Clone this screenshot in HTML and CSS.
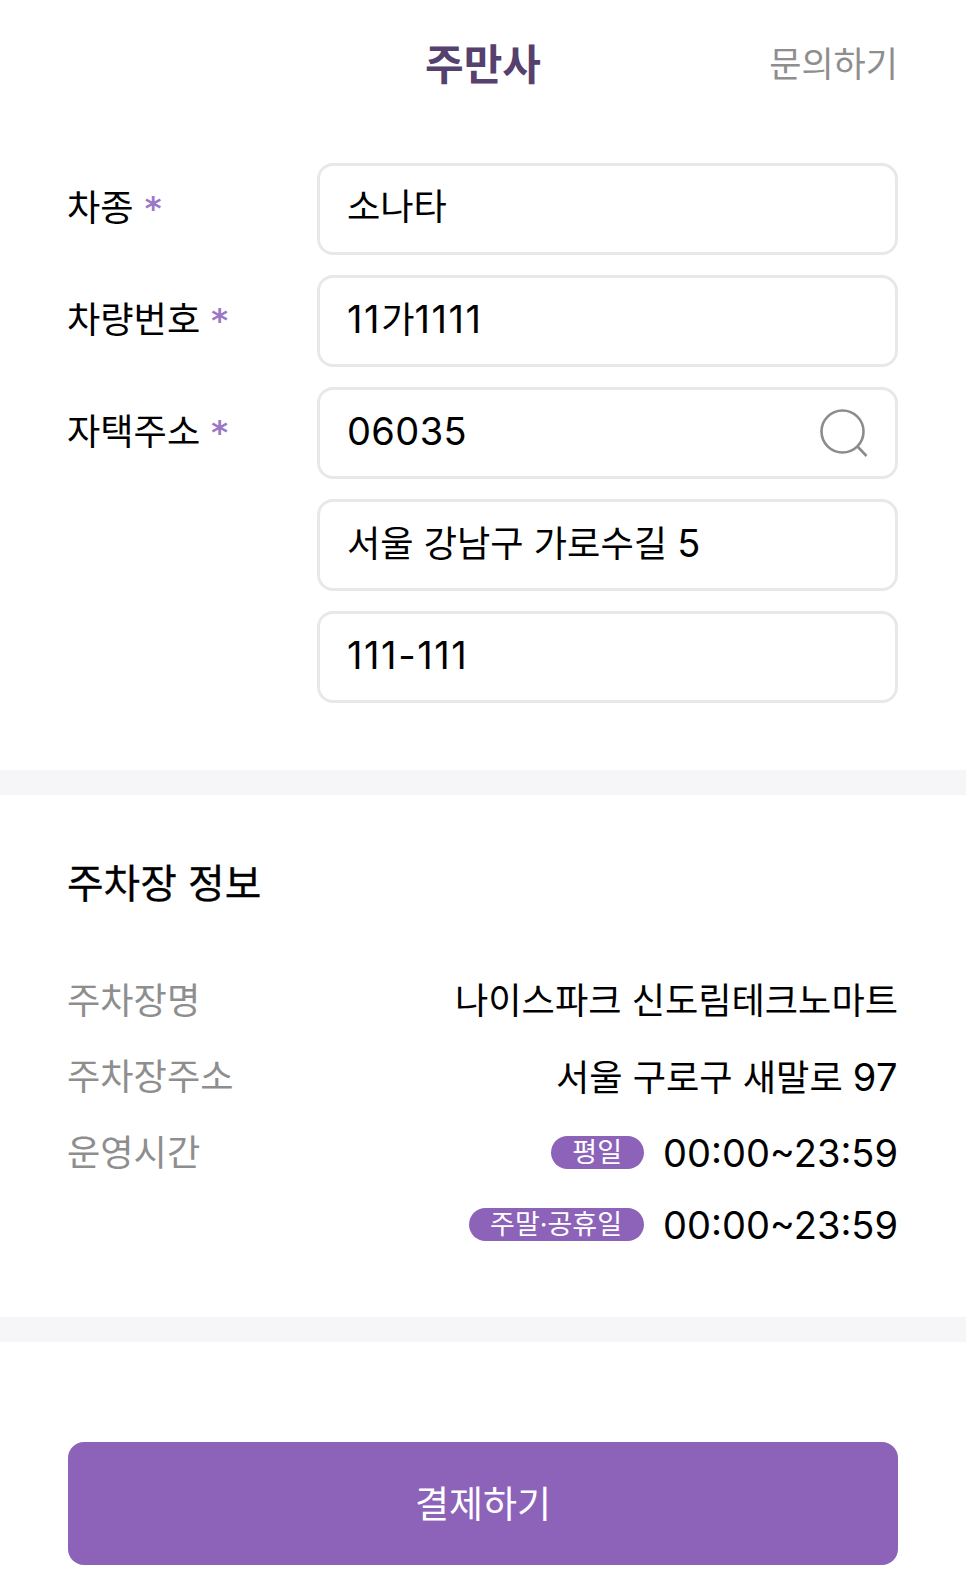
FILE: index.html
```html
<html lang="ko">

<head>
    <meta charset="UTF-8">
    <meta name="viewport" content="width=device-width, initial-scale=1.0">
    <title>주만사</title>
    <link rel="stylesheet" href="styles.css">
</head>

<body>
    <div class="header">
        <div></div>
        <div class="header-title">주만사</div>
        <div class="header-link">문의하기</div>
    </div>

    <div class="form">
        <div class="form-row">
            <div class="form-label">차종 <span class="required">*</span></div>
            <div class="form-fields">
                <div class="input"><span>소나타</span></div>
            </div>
        </div>
        <div class="form-row">
            <div class="form-label">차량번호 <span class="required">*</span></div>
            <div class="form-fields">
                <div class="input"><span><span class="num num-wide">11</span>가<span class="num num-wide">1111</span></span></div>
            </div>
        </div>
        <div class="form-row">
            <div class="form-label">자택주소 <span class="required">*</span></div>
            <div class="form-fields">
                <div class="input input-search">
                    <span class="num">06035</span>
                    <svg class="search-icon" viewBox="0 0 50 50" width="50" height="50">
                        <circle cx="22.5" cy="22.5" r="21" fill="none" stroke="#8c8c8c" stroke-width="2.6" />
                        <line x1="37.5" y1="37.5" x2="46.5" y2="47" stroke="#8c8c8c" stroke-width="2.6" />
                    </svg>
                </div>
                <div class="input"><span>서울 강남구 가로수길 <span class="num">5</span></span></div>
                <div class="input"><span class="num num-wide">111-111</span></div>
            </div>
        </div>
    </div>

    <div class="divider"></div>

    <div class="info">
        <div class="info-title">주차장 정보</div>
        <div class="info-row">
            <div class="info-label">주차장명</div>
            <div class="info-value">나이스파크 신도림테크노마트</div>
        </div>
        <div class="info-row">
            <div class="info-label">주차장주소</div>
            <div class="info-value">서울 구로구 새말로 <span class="num">97</span></div>
        </div>
        <div class="info-row info-row-hours">
            <div class="info-label">운영시간</div>
            <div class="info-value hours">
                <span class="pill">평일</span>
                <span class="num time">00:00~23:59</span>
            </div>
        </div>
        <div class="info-row info-row-last">
            <div class="info-label"></div>
            <div class="info-value hours">
                <span class="pill">주말·공휴일</span>
                <span class="num time">00:00~23:59</span>
            </div>
        </div>
    </div>

    <div class="divider"></div>

    <div class="footer">
        <div class="pay-button">결제하기</div>
    </div>
</body>

</html>
```

FILE: styles.css
```css
html,
body {
    width: 100%;
    height: 100%;
    padding: 0;
    margin: 0;
    background-color: white;
    font-family: Inter, "Noto Sans CJK KR", sans-serif;
    font-size: 36.2px;
    color: black;
}

.num {
    font-size: 38px;
    letter-spacing: 0.4px;
}

.num-wide {
    letter-spacing: 1.6px;
}

.time {
    letter-spacing: 0;
}

.header {
    display: grid;
    grid-template-columns: 1fr auto 1fr;
    align-items: center;
    height: 123px;
    padding: 0 68px 4px;
}

.header-title {
    font-size: 42px;
    font-weight: 700;
    color: #55406e;
}

.header-link {
    font-size: 35px;
    color: #8e8e8e;
    text-align: right;
}

.form {
    padding: 36px 68px 67px 67px;
    display: flex;
    flex-direction: column;
    gap: 20px;
}

.form-row {
    display: flex;
}

.form-label {
    width: 250px;
    flex-shrink: 0;
    line-height: 90px;
}

.required {
    font-family: "DejaVu Sans", sans-serif;
    font-size: 32px;
    font-weight: 700;
    color: #9b77c8;
    margin-left: 1px;
    vertical-align: 2px;
}

.form-fields {
    flex: 1;
    display: flex;
    flex-direction: column;
    gap: 20px;
}

.input {
    height: 92px;
    box-sizing: border-box;
    border: 3px solid #e8e8e8;
    border-radius: 16px;
    padding: 0 27px 4px;
    display: flex;
    align-items: center;
    justify-content: space-between;
    line-height: 40px;
}

.search-icon {
    margin-right: -2px;
    margin-top: 6px;
}

.divider {
    height: 25px;
    background-color: #f6f6f9;
}

.info {
    padding: 64px 68px 67px 67px;
}

.info-title {
    font-size: 39.8px;
    -webkit-text-stroke: 0.3px black;
    line-height: 50px;
    margin-bottom: 67px;
}

.info-row {
    display: flex;
    justify-content: space-between;
    align-items: flex-start;
    height: 76px;
    line-height: 50px;
}

.info-row-hours {
    height: 72px;
}

.info-row-last {
    height: 50px;
}

.info-label {
    color: #8e8e8e;
}

.hours {
    display: flex;
    align-items: center;
    gap: 19px;
}

.pill {
    background-color: #8c63b9;
    color: white;
    font-size: 27px;
    line-height: 33px;
    border-radius: 17px;
    padding: 0 22px 0 21px;
    margin-bottom: 2px;
}

.footer {
    padding: 100px 68px 29px;
}

.pay-button {
    height: 119px;
    padding-bottom: 4px;
    border-radius: 16px;
    background-color: #8c63b9;
    color: white;
    font-size: 37px;
    display: flex;
    align-items: center;
    justify-content: center;
}
```
